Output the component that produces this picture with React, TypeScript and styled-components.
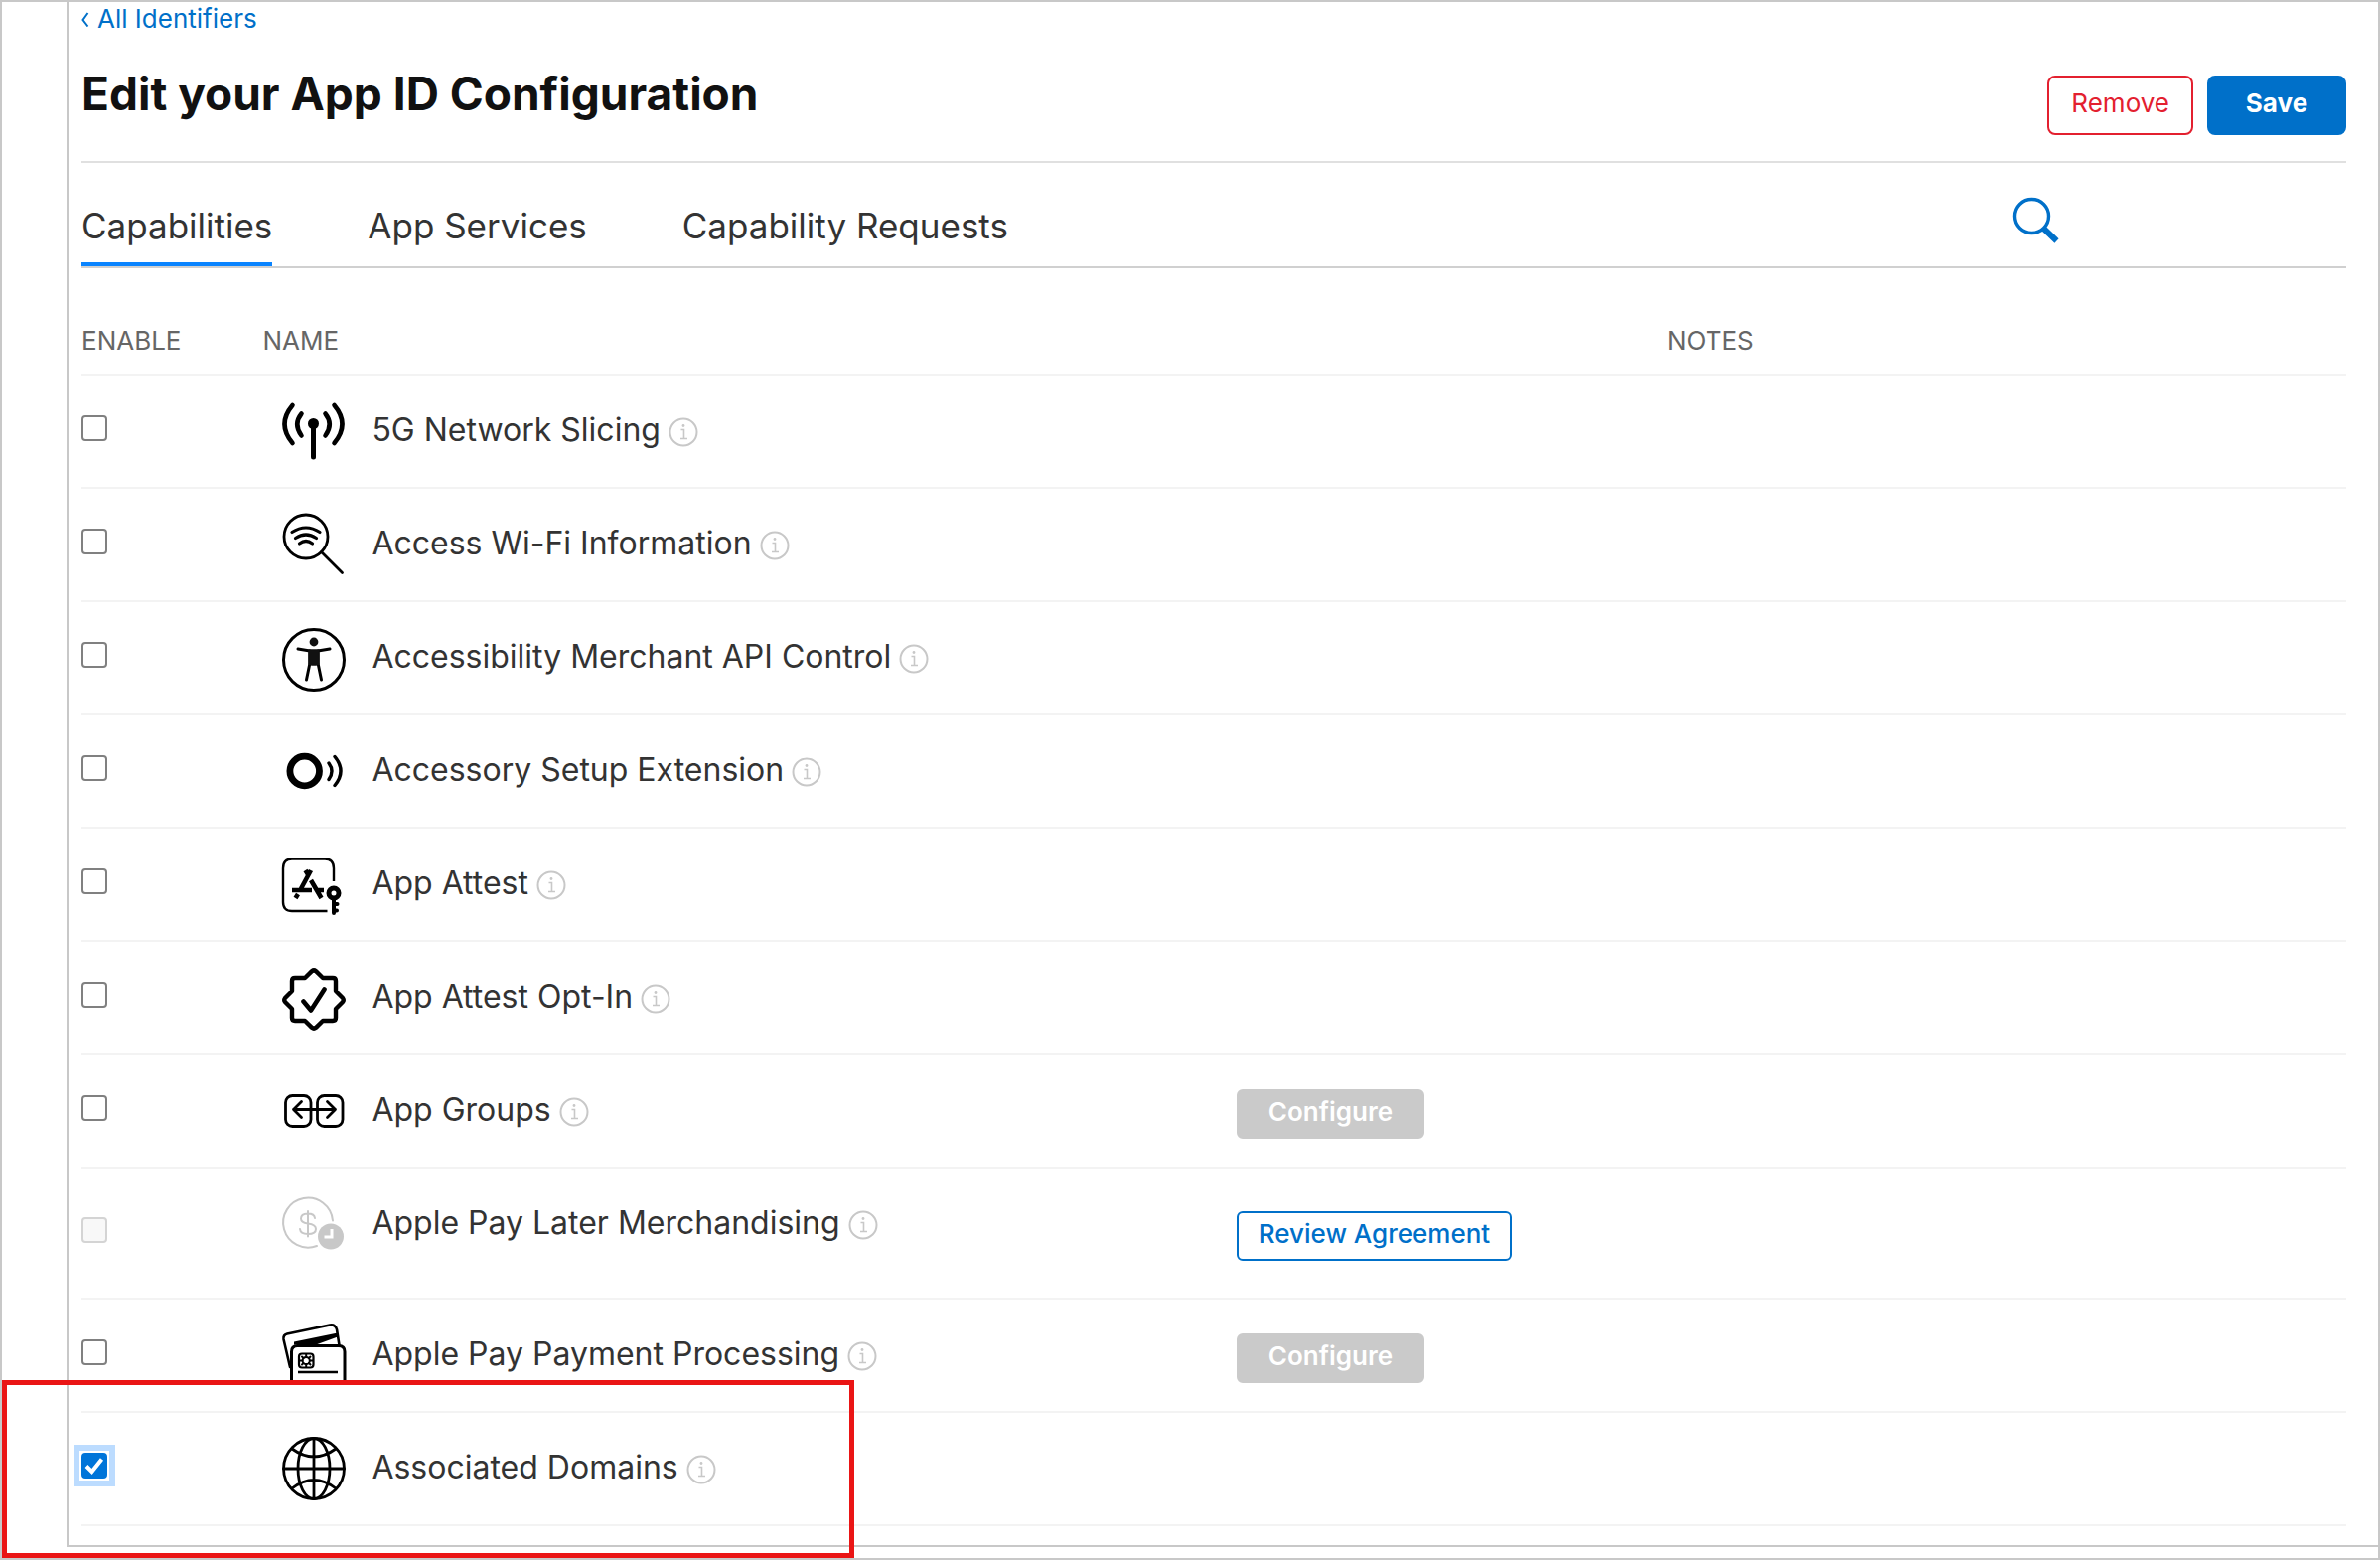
import React, { useState } from "react";
import styled, { createGlobalStyle, css } from "styled-components";

const blue = "#0070c9";
const red = "#e3202f";
const line = "#c8c8c8";
const hairline = "#f3f3f3";

const GlobalStyle = createGlobalStyle`
  *, *::before, *::after { box-sizing: border-box; }
  body {
    margin: 0;
    background: #fff;
    color: #333;
    font-family: Inter, "Liberation Sans", sans-serif;
  }
  button { font-family: inherit; cursor: pointer; }
`;

const Frame = styled.div`
  position: relative;
  border: 2px solid ${line};
  padding: 0 0 11px 65px;
`;

const Panel = styled.main`
  border-left: 2px solid ${line};
  border-bottom: 2px solid ${line};
  padding: 0 32px 19px 13px;
`;

const BackLink = styled.a`
  display: flex;
  align-items: center;
  gap: 8px;
  width: fit-content;
  font-size: 26px;
  line-height: 34px;
  color: ${blue};
  text-decoration: none;
`;

const Header = styled.header`
  display: flex;
  align-items: flex-end;
  justify-content: space-between;
  padding: 30px 0 26px;
  border-bottom: 2px solid #e0e0e0;
`;

const Title = styled.h1`
  margin: 0;
  padding-bottom: 14px;
  font-size: 46px;
  line-height: 56px;
  font-weight: 700;
  color: #111;
`;

const Actions = styled.div`
  display: flex;
  gap: 14px;
`;

const ActionButton = styled.button<{ $primary?: boolean }>`
  height: 60px;
  min-width: 140px;
  padding: 0 22px 6px;
  border: 2px solid ${(p) => (p.$primary ? blue : red)};
  border-radius: 8px;
  background: ${(p) => (p.$primary ? blue : "#fff")};
  color: ${(p) => (p.$primary ? "#fff" : red)};
  font-size: 26px;
  font-weight: ${(p) => (p.$primary ? 700 : 400)};
`;

const TabBar = styled.div`
  display: flex;
  align-items: flex-end;
  justify-content: space-between;
  border-bottom: 2px solid #d0d0d0;
`;

const Tabs = styled.nav`
  display: flex;
  gap: 96px;
`;

const Tab = styled.button<{ $active?: boolean }>`
  padding: 43px 0 17px;
  border: 0;
  border-bottom: 4px solid ${(p) => (p.$active ? "#0a84ff" : "transparent")};
  background: none;
  color: #333;
  font-size: 35px;
  line-height: 40px;
`;

const SearchButton = styled.button`
  display: flex;
  margin: 0 288px 22px 0;
  padding: 0;
  border: 0;
  background: none;
  color: ${blue};
`;

const Table = styled.table`
  width: 100%;
  table-layout: fixed;
  border-collapse: separate;
  border-spacing: 0;
`;

const HeadCell = styled.th<{ $width: string }>`
  width: ${(p) => p.$width};
  height: 108px;
  padding: 0 0 18px;
  border-bottom: 2px solid ${hairline};
  vertical-align: bottom;
  text-align: left;
  font-size: 26px;
  line-height: 30px;
  font-weight: 400;
  color: #666;
`;

const Row = styled.tr<{ $tall?: boolean }>`
  height: ${(p) => (p.$tall ? 132 : 114)}px;
`;

const Cell = styled.td`
  padding: 0;
  border-bottom: 2px solid ${hairline};
  vertical-align: middle;
`;

const CheckCell = styled(Cell)`
  padding-bottom: 6px;
`;

const NameCell = styled(Cell)`
  padding: 25px 0 0 20px;
  vertical-align: top;
`;

const ActionCell = styled(Cell)`
  padding-top: 5px;
`;

const NameLine = styled.div`
  display: flex;
  align-items: center;
`;

const NameLabel = styled.label`
  padding: 0 8px 4px 26px;
  font-size: 32px;
  line-height: 40px;
  white-space: nowrap;
`;

const InfoButton = styled.button`
  display: flex;
  padding: 0;
  border: 0;
  background: none;
  color: #c8c8c8;
`;

const CheckWrap = styled.span<{ $focused?: boolean }>`
  display: grid;
  width: 26px;
  height: 26px;
  ${(p) =>
    p.$focused &&
    css`
      box-shadow: 0 0 0 2px #fff, 0 0 0 8px #bcdcff;
    `}
  & > * {
    grid-area: 1 / 1;
  }
  svg {
    pointer-events: none;
  }
`;

const CheckInput = styled.input`
  appearance: none;
  width: 26px;
  height: 26px;
  margin: 0;
  border: 2px solid #808080;
  border-radius: 4px;
  background: #fff;
  outline: none;
  &:checked {
    border-color: #0075d9;
    background: #0075d9;
  }
  &:disabled {
    border-color: #d4d4d4;
    background: #f8f8f8;
  }
`;

const RowButton = styled.button<{ $outlined?: boolean }>`
  display: block;
  height: 50px;
  border: 2px solid ${(p) => (p.$outlined ? blue : "#cacaca")};
  border-radius: 6px;
  background: ${(p) => (p.$outlined ? "#fff" : "#cacaca")};
  color: ${(p) => (p.$outlined ? blue : "#fff")};
  padding: ${(p) => (p.$outlined ? "0 20px 4px" : "0 30px 4px")};
  font-size: 26px;
  font-weight: ${(p) => (p.$outlined ? 500 : 600)};
  white-space: nowrap;
`;

const Highlight = styled.div`
  position: absolute;
  left: 0;
  bottom: 0;
  width: 858px;
  height: 179px;
  border: 5px solid #ea1515;
  pointer-events: none;
`;

const IconSvg = styled.svg`
  flex: none;
  width: 64px;
  height: 64px;
  overflow: visible;
  fill: none;
  stroke: #000;
  stroke-linecap: round;
  stroke-linejoin: round;
`;

const AntennaIcon = () => (
  <IconSvg viewBox="0 0 64 64" strokeWidth="5">
    <path d="M31.5 24V57" />
    <circle cx="31.5" cy="23.5" r="5.5" fill="#000" stroke="none" />
    <path d="M19.5 13.5Q11 24 19.5 35.5M43.5 13.5Q52 24 43.5 35.5" strokeWidth="4.6" />
    <path d="M10.5 5Q-5.5 24 10.5 43M52.5 5Q68.5 24 52.5 43" strokeWidth="4.6" />
  </IconSvg>
);

const WifiSearchIcon = () => (
  <IconSvg viewBox="0 0 64 64" strokeWidth="2.8">
    <circle cx="24" cy="23" r="22" />
    <path d="M39.5 38.5L60.5 59.5" />
    <path d="M10 18.5Q24 9.5 38 18.5M13.5 24.5Q24 17.5 34.5 24.5M17.5 30Q24 25 30.5 30" strokeWidth="3.2" />
  </IconSvg>
);

const AccessibilityIcon = () => (
  <IconSvg viewBox="0 0 64 64" strokeWidth="3">
    <circle cx="32" cy="33" r="30.5" />
    <circle cx="32" cy="15" r="4.4" fill="#111" stroke="none" />
    <path d="M16 22L28 24V36L24.5 53M48 22L36 24V36L39.5 53" />
    <path d="M27 23H37V37L34 38H30L27 37Z" fill="#111" stroke="#111" strokeWidth="1.5" />
  </IconSvg>
);

const AccessoryIcon = () => (
  <IconSvg viewBox="0 0 64 64" strokeWidth="3.4">
    <circle cx="22.7" cy="31" r="14.8" strokeWidth="6.8" />
    <path d="M47 23Q53 31 47 39.5M53 16.5Q65 31 53 45.5" />
  </IconSvg>
);

const AttestIcon = () => (
  <IconSvg viewBox="0 0 64 64" strokeWidth="2.4">
    <path d="M45.5 58H10Q1 58 1 49V15Q1 5.5 10 5.5H43Q52 5.5 52 15V28" strokeLinecap="butt" />
    <path
      d="M29 17L19 35.5M23.5 17L26.5 22M10 37H30M16 41L13.5 45M29 27L39.5 45M35.5 37H42"
      strokeWidth="4.6"
      strokeLinecap="butt"
    />
    <circle cx="52" cy="40" r="5" strokeWidth="5" />
    <path d="M52 45V60M52 51H55.5M52 57.5H55" strokeWidth="4" />
  </IconSvg>
);

const SealIcon = () => (
  <IconSvg viewBox="0 0 64 64" strokeWidth="4.4">
    <path d="M30 4.2Q32 2.5 34 4.2L41 11H51Q54 11 54 14V24L61 31Q62.5 33 61 35L54 42V52Q54 55 51 55H41L34 61.8Q32 63.5 30 61.8L23 55H13Q10 55 10 52V42L3 35Q1.5 33 3 31L10 24V14Q10 11 13 11H23Z" />
    <path d="M21.5 34.5L29 43.5L42.5 22.5" strokeWidth="4.6" />
  </IconSvg>
);

const GroupsIcon = () => (
  <IconSvg viewBox="0 0 64 64" strokeWidth="2.8">
    <rect x="3.5" y="15.5" width="25.5" height="31" rx="7" />
    <rect x="35.5" y="15.5" width="25.5" height="31" rx="7" />
    <path d="M11.5 29.5H53.5M19.5 21.5L11.5 29.5L19.5 37.5M45.5 21.5L53.5 29.5L45.5 37.5" />
  </IconSvg>
);

const PayLaterIcon = () => (
  <IconSvg viewBox="0 0 64 64" strokeWidth="2">
    <g stroke="#c8c8c8">
      <path d="M51 27.5A25 25 0 1 0 35 53" />
      <path d="M26 18V43.5M33 25Q32.5 20.5 26 20.5Q19 20.5 19 25.5Q19 29.5 26 30.5Q34 31.5 34 36Q34 41 26 41Q18.5 41 18 36" />
    </g>
    <circle cx="49" cy="43.5" r="13" fill="#c8c8c8" stroke="none" />
    <path d="M50 36V44H42.5" stroke="#fff" strokeWidth="3" strokeLinecap="butt" strokeLinejoin="miter" />
  </IconSvg>
);

const CardsIcon = () => (
  <IconSvg viewBox="0 0 64 64" strokeWidth="2.6">
    <path d="M8 43L1.5 15Q1 10.5 5 9.5L48 0.5Q53.5 -0.5 55 5L57.5 21" />
    <path d="M12 17.5L56 8.5V12.5L34 20.5H12Z" fill="#000" stroke="none" />
    <path d="M9.5 57V27.5Q9.5 21.5 15.5 21.5H57Q63 21.5 63 27.5V57" strokeWidth="3" strokeLinecap="butt" />
    <rect x="17" y="29.5" width="14.5" height="14" rx="3" strokeWidth="2.2" />
    <circle cx="24.2" cy="36.5" r="3.6" strokeWidth="2" />
    <path
      d="M24.2 30V32.5M24.2 40.5V43M17.5 36.5H20.5M28 36.5H31M20 32.5L21.5 34M28.5 32.5L27 34M20 40.5L21.5 39M28.5 40.5L27 39"
      strokeWidth="2"
    />
    <path d="M16 48H56" strokeLinecap="butt" />
  </IconSvg>
);

const GlobeIcon = () => (
  <IconSvg viewBox="0 0 64 64" strokeWidth="2.8">
    <circle cx="32" cy="31" r="30.5" />
    <ellipse cx="32" cy="31" rx="16" ry="30.5" />
    <path d="M32 0.5V61.5M1.5 31H62.5M10 11Q32 27 54 11M10 51Q32 34 54 51" />
  </IconSvg>
);

const InfoIcon = () => (
  <svg width="30" height="30" viewBox="0 0 30 30" fill="none" stroke="currentColor" strokeWidth="2">
    <circle cx="15" cy="15" r="13.5" />
    <path d="M12.5 12.5H15.5V21.5M12 21.5H19" strokeWidth="1.6" />
    <circle cx="15" cy="8.5" r="1.4" fill="currentColor" stroke="none" />
  </svg>
);

const SearchIcon = () => (
  <svg width="48" height="48" viewBox="0 0 48 48" fill="none" stroke="currentColor">
    <circle cx="19.5" cy="19.5" r="17" strokeWidth="3.4" />
    <path d="M31 31.5L44.5 44.5" strokeWidth="6" />
  </svg>
);

const ChevronIcon = () => (
  <svg width="8" height="16" viewBox="0 0 8 16" fill="none" stroke="currentColor" strokeWidth="2">
    <path d="M6.5 2L1.5 9L6.5 15.5" />
  </svg>
);

const CheckMark = () => (
  <svg width="26" height="26" viewBox="0 0 26 26" fill="none" stroke="#fff" strokeWidth="4">
    <path d="M5 13.5L10.5 19L20.5 6.5" />
  </svg>
);

type Capability = {
  id: string;
  name: string;
  Icon: () => React.ReactElement;
  action?: "Configure" | "Review Agreement";
  disabled?: boolean;
};

const capabilities: Capability[] = [
  { id: "slicing", name: "5G Network Slicing", Icon: AntennaIcon },
  { id: "wifi", name: "Access Wi-Fi Information", Icon: WifiSearchIcon },
  { id: "merchant-api", name: "Accessibility Merchant API Control", Icon: AccessibilityIcon },
  { id: "accessory", name: "Accessory Setup Extension", Icon: AccessoryIcon },
  { id: "attest", name: "App Attest", Icon: AttestIcon },
  { id: "attest-opt-in", name: "App Attest Opt-In", Icon: SealIcon },
  { id: "groups", name: "App Groups", Icon: GroupsIcon, action: "Configure" },
  { id: "pay-later", name: "Apple Pay Later Merchandising", Icon: PayLaterIcon, action: "Review Agreement", disabled: true },
  { id: "pay-processing", name: "Apple Pay Payment Processing", Icon: CardsIcon, action: "Configure" },
  { id: "domains", name: "Associated Domains", Icon: GlobeIcon },
];

const tabs = ["Capabilities", "App Services", "Capability Requests"];

export default function App() {
  const [enabled, setEnabled] = useState<string[]>(["domains"]);
  const [tab, setTab] = useState(tabs[0]);

  const toggle = (id: string) =>
    setEnabled((ids) => (ids.includes(id) ? ids.filter((x) => x !== id) : [...ids, id]));

  return (
    <>
      <GlobalStyle />
      <Frame>
        <Panel>
          <BackLink href="#identifiers">
            <ChevronIcon />
            All Identifiers
          </BackLink>
          <Header>
            <Title>Edit your App ID Configuration</Title>
            <Actions>
              <ActionButton type="button">Remove</ActionButton>
              <ActionButton type="button" $primary>
                Save
              </ActionButton>
            </Actions>
          </Header>
          <TabBar>
            <Tabs>
              {tabs.map((name) => (
                <Tab key={name} type="button" $active={name === tab} onClick={() => setTab(name)}>
                  {name}
                </Tab>
              ))}
            </Tabs>
            <SearchButton type="button" aria-label="Search">
              <SearchIcon />
            </SearchButton>
          </TabBar>
          <Table>
            <thead>
              <tr>
                <HeadCell $width="8%">ENABLE</HeadCell>
                <HeadCell $width="43%">NAME</HeadCell>
                <HeadCell $width="19%" />
                <HeadCell $width="30%">NOTES</HeadCell>
              </tr>
            </thead>
            <tbody>
              {capabilities.map(({ id, name, Icon, action, disabled }) => {
                const checked = enabled.includes(id);
                return (
                  <Row key={id} $tall={disabled}>
                    <CheckCell>
                      <CheckWrap $focused={checked}>
                        <CheckInput
                          type="checkbox"
                          id={id}
                          checked={checked}
                          disabled={disabled}
                          onChange={() => toggle(id)}
                        />
                        {checked && <CheckMark />}
                      </CheckWrap>
                    </CheckCell>
                    <NameCell>
                      <NameLine>
                        <Icon />
                        <NameLabel htmlFor={id}>{name}</NameLabel>
                        <InfoButton type="button" aria-label={`About ${name}`}>
                          <InfoIcon />
                        </InfoButton>
                      </NameLine>
                    </NameCell>
                    <ActionCell>
                      {action && (
                        <RowButton type="button" disabled={action === "Configure"} $outlined={action !== "Configure"}>
                          {action}
                        </RowButton>
                      )}
                    </ActionCell>
                    <Cell />
                  </Row>
                );
              })}
            </tbody>
          </Table>
        </Panel>
        <Highlight />
      </Frame>
    </>
  );
}
